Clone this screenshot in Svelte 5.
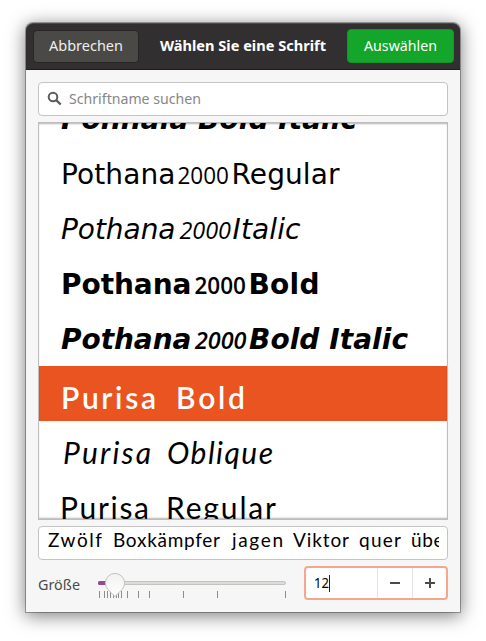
<script>
  const dejavu = '"DejaVu Sans", sans-serif';
  const digits = '"Open Sans", sans-serif';
  const hand = 'Lato, "Open Sans", sans-serif';

  const pothana = (weight, italic, w, dx, t, tx, tw) => [
    { t: 'Pothana', x: 22, w, y: 38, size: 28, font: dejavu, weight, italic },
    { t: '2000', x: dx, w: 51.5, y: 38, size: 23.5, font: digits, weight: weight === 700 ? 600 : 400, italic, squeeze: true },
    { t, x: tx, w: tw, y: 38, size: 28, font: dejavu, weight, italic }
  ];
  const purisa = (weight, italic, x, w, t, tx, tw) => [
    { t: 'Purisa', x, w, y: 43, size: 30, font: hand, weight, italic },
    { t, x: tx, w: tw, y: 43, size: 30, font: hand, weight, italic }
  ];

  const rows = [
    { runs: [{ t: 'Ponnala Bold Italic', x: 22, w: 296, y: 38, size: 28, font: dejavu, weight: 700, italic: true }] },
    { runs: pothana(400, false, 114.5, 138.5, 'Regular', 192.5, 108) },
    { runs: pothana(400, true, 114.5, 140.5, 'Italic', 193.5, 68) },
    { runs: pothana(700, false, 130.5, 155.5, 'Bold', 209.5, 71) },
    { runs: pothana(700, true, 130.5, 156, 'Bold Italic', 210, 159) },
    { selected: true, runs: purisa(600, false, 22, 95, 'Bold', 137, 69) },
    { runs: purisa(400, true, 24, 88, 'Oblique', 128, 106) },
    { runs: purisa(400, false, 21, 89, 'Regular', 127, 110) }
  ];

  const preview = [
    ['Zwölf', 9, 54], ['Boxkämpfer', 74, 107], ['jagen', 193, 51],
    ['Viktor', 254, 56], ['quer', 320, 42], ['über', 372, 40]
  ].map(([t, x, w]) => ({ t, x, w, y: 20, size: 19, font: hand }));

  const ticks = [1, 6, 9, 12, 15, 18, 20, 23, 29, 40, 51, 85, 119, 187];
  const ui = '"Noto Sans", "Open Sans", sans-serif';
</script>

{#snippet run(r)}
  <text
    x={r.x} y={r.y} textLength={r.w}
    lengthAdjust={r.squeeze ? 'spacingAndGlyphs' : 'spacing'}
    font-size={r.size} font-family={r.font}
    font-weight={r.weight ?? 400} font-style={r.italic ? 'italic' : 'normal'}
    fill="currentColor">{r.t}</text>
{/snippet}

{#snippet label(t, w, weight = 400)}
  <svg width={w} height="20" class="label">
    {@render run({ t, x: 0, y: 15, w, size: 14, font: ui, weight, squeeze: true })}
  </svg>
{/snippet}

<div class="desktop">
  <div class="window">
    <header>
      <button class="cancel">{@render label('Abbrechen', 74)}</button>
      <h1>{@render label('Wählen Sie eine Schrift', 166, 700)}</h1>
      <button class="select">{@render label('Auswählen', 73)}</button>
    </header>
    <main>
      <div class="field search">
        <svg width="16" height="16" viewBox="0 0 16 16">
          <circle cx="6" cy="6" r="4.3" fill="none" stroke="#5c5c5c" stroke-width="2" />
          <path d="M9.2 9.2 L13.7 13.5" stroke="#5c5c5c" stroke-width="2.4" />
        </svg>
        {@render label('Schriftname suchen', 132)}
      </div>
      <div class="list">
        <div class="rows">
          {#each rows as row}
            <div class="row" class:selected={row.selected}>
              <svg width="408" height="55">
                {#each row.runs as r}{@render run(r)}{/each}
              </svg>
            </div>
          {/each}
        </div>
      </div>
      <div class="field preview">
        <svg width="400" height="32">
          {#each preview as r}{@render run(r)}{/each}
        </svg>
      </div>
      <div class="size">
        <div class="caption">{@render label('Größe', 42)}</div>
        <svg class="slider" width="190" height="34">
          <rect x="0.5" y="15.5" width="187" height="3" rx="1.5" fill="#dcdcda" stroke="#c3c4c0" />
          <rect x="0" y="15" width="14" height="4" rx="1.5" fill="#924d8b" />
          {#each ticks as x}
            <rect {x} y="25" width="1" height="7" fill="#8e8e8e" />
          {/each}
          <defs>
            <linearGradient id="knob" x1="0" y1="0" x2="0" y2="1">
              <stop offset="0" stop-color="#f2f2f1" />
              <stop offset="1" stop-color="#ffffff" />
            </linearGradient>
          </defs>
          <path d="M17 30.5 L9.8 23.4 A9.6 9.6 0 1 1 24.2 23.4 Z" fill="url(#knob)" stroke="#c3c1bc" />
        </svg>
        <div class="spin">
          <div class="value">{@render label('12', 15)}<i></i></div>
          <div class="step"><svg width="10" height="10"><path d="M0 5H10" stroke="#4a4a4a" stroke-width="2" /></svg></div>
          <div class="step plus"><svg width="10" height="10"><path d="M0 5H10M5 0V10" stroke="#4a4a4a" stroke-width="2" /></svg></div>
        </div>
      </div>
    </main>
  </div>
</div>

<style>
  :global(body) { background: #fff; }
  .desktop { width: 486px; height: 641px; box-sizing: border-box; padding: 23px 26px 29px; overflow: hidden; }
  .window {
    width: 434px; height: 589px; border-radius: 7px 7px 0 0; background: #f6f6f6;
    box-shadow: 0 0 0 1px rgba(0, 0, 0, 0.3), 0 3px 18px 1px rgba(0, 0, 0, 0.5);
  }
  svg { display: block; flex: none; }
  .label { overflow: visible; }
  header {
    display: flex; align-items: center; height: 47px; box-sizing: border-box; padding: 0 6px 1px 7px;
    background: #322f30; border-bottom: 1px solid #1e1c1d; border-top: 1px solid #4b4949;
    border-radius: 7px 7px 0 0; color: #fff;
  }
  h1 { margin: 0; flex: 1; display: flex; justify-content: center; }
  button {
    display: flex; align-items: center; justify-content: center; padding: 0; margin: 0;
    border-radius: 4px; box-sizing: border-box;
  }
  .cancel { width: 106px; height: 33px; background: #4a4946; border: 1px solid #272526; color: #eee; }
  .select { width: 107px; height: 34px; background: #14a52b; border: 1px solid #12962a; color: #fff; }
  main { padding: 12px; display: flex; flex-direction: column; gap: 6px; }
  .field {
    height: 34px; box-sizing: border-box; background: #fff; border: 1px solid #c4c4c4;
    border-radius: 4px; display: flex; align-items: center;
  }
  .search { color: #868686; padding-left: 8px; gap: 6px; }
  .list {
    height: 398px; box-sizing: border-box; border: 1px solid #bdbdbd; background: #fff; overflow: hidden;
    position: relative; color: #000;
  }
  .list::after {
    content: ''; position: absolute; inset: 0;
    box-shadow: inset 0 2px 2px -1px rgba(0, 0, 0, 0.3), inset 0 -2px 2px -1px rgba(0, 0, 0, 0.3);
  }
  .rows { margin-top: -32px; }
  .row { height: 55px; }
  .selected { background: #e95420; color: #fff; }
  .preview { overflow: hidden; color: #000; }
  .size { display: flex; height: 34px; align-items: center; }
  .caption { width: 60px; color: #4a4a4a; padding-top: 3px; }
  .slider { margin-right: auto; }
  .spin {
    width: 144px; height: 34px; box-sizing: border-box; border: 2px solid #f5a68c; border-radius: 4px;
    background: #fff; display: flex;
  }
  .value { flex: 1; display: flex; align-items: center; padding-left: 8px; color: #000; }
  .value i { width: 1px; height: 17px; background: #222; }
  .step { width: 34px; border-left: 1px solid #e4e4e4; display: flex; align-items: center; justify-content: center; }
  .plus { width: 32px; padding-left: 1px; }
</style>
